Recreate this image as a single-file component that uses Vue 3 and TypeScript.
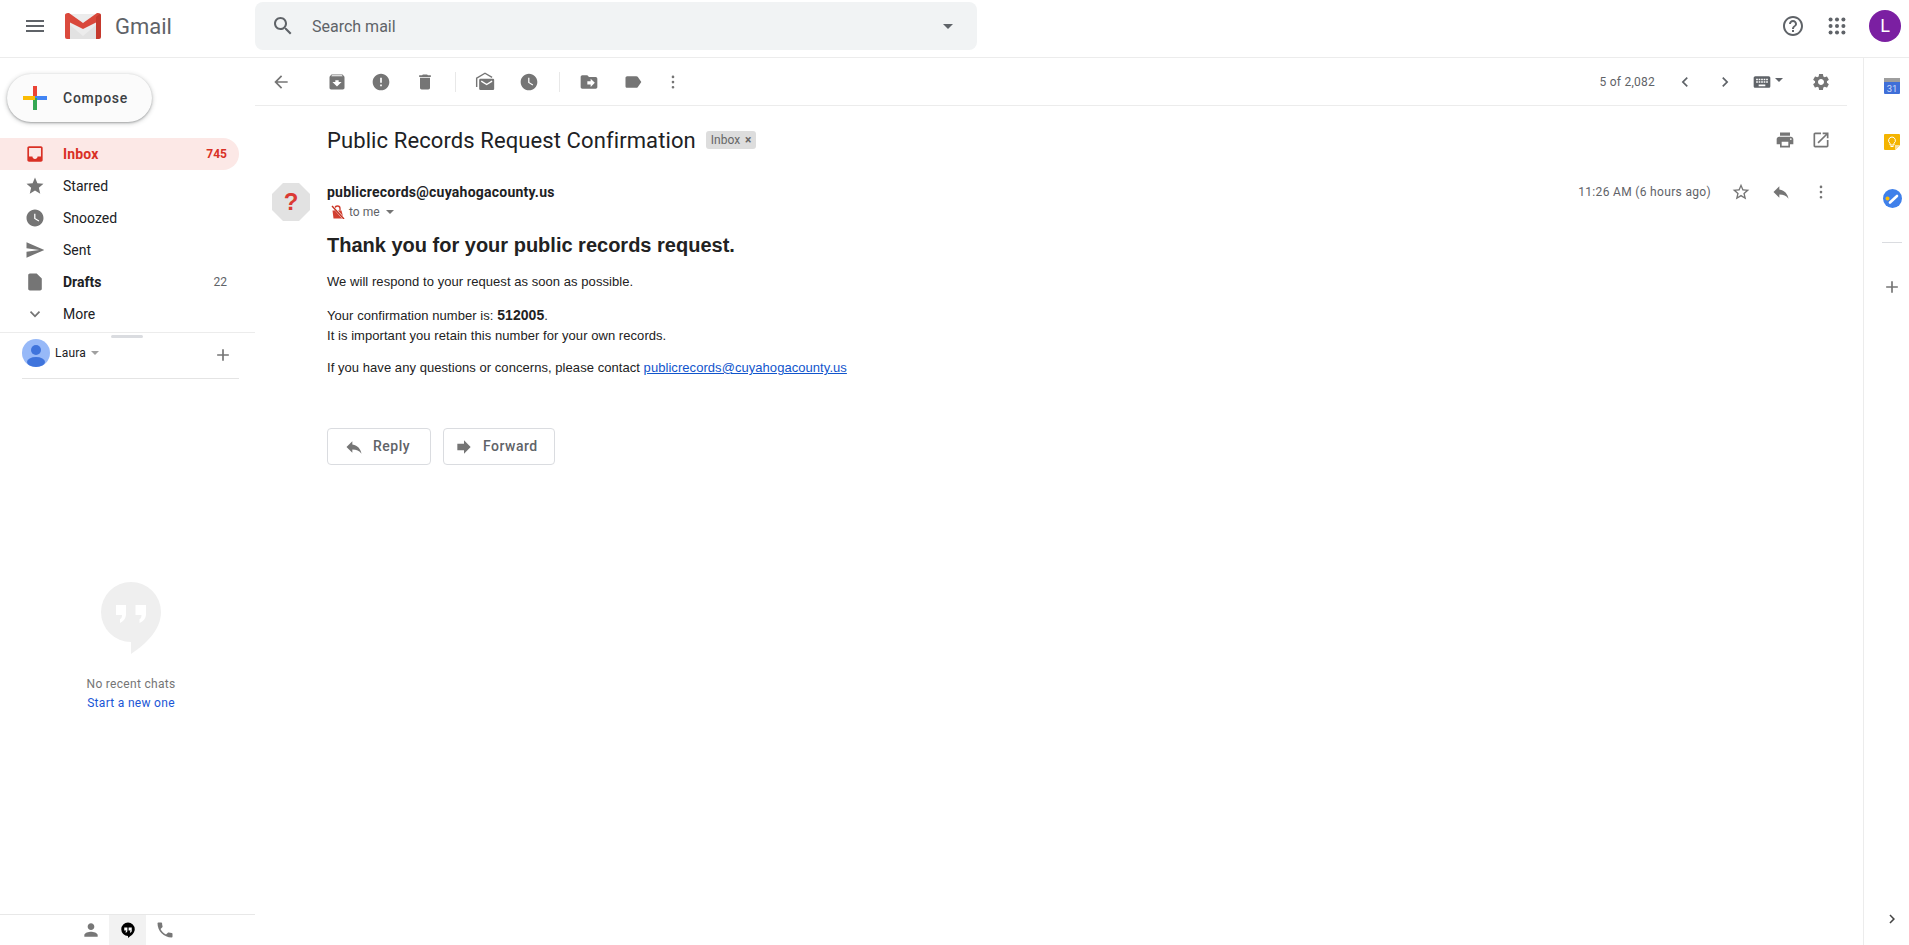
<script setup lang="ts">
const p = {
  menu: 'M3 18h18v-2H3v2zm0-5h18v-2H3v2zm0-7v2h18V6H3z',
  search: 'M15.5 14h-.79l-.28-.27C15.41 12.59 16 11.11 16 9.5 16 5.91 13.09 3 9.5 3S3 5.91 3 9.5 5.91 16 9.5 16c1.61 0 3.09-.59 4.23-1.57l.27.28v.79l5 4.99L20.49 19l-4.99-5zm-6 0C7.01 14 5 11.99 5 9.5S7.01 5 9.5 5 14 7.01 14 9.5 11.99 14 9.5 14z',
  help: 'M11 18h2v-2h-2v2zm1-16C6.48 2 2 6.48 2 12s4.48 10 10 10 10-4.48 10-10S17.52 2 12 2zm0 18c-4.41 0-8-3.59-8-8s3.59-8 8-8 8 3.59 8 8-3.59 8-8 8zm0-14c-2.21 0-4 1.79-4 4h2c0-1.1.9-2 2-2s2 .9 2 2c0 2-3 1.75-3 5h2c0-2.25 3-2.5 3-5 0-2.21-1.79-4-4-4z',
  back: 'M20 11H7.83l5.59-5.59L12 4l-8 8 8 8 1.41-1.41L7.83 13H20v-2z',
  archive: 'M20.54 5.23l-1.39-1.68C18.88 3.21 18.47 3 18 3H6c-.47 0-.88.21-1.16.55L3.46 5.23C3.17 5.57 3 6.02 3 6.5V19c0 1.1.9 2 2 2h14c1.1 0 2-.9 2-2V6.5c0-.48-.17-.93-.46-1.27zM12 17.5L6.5 12H10v-2h4v2h3.5L12 17.5zM5.12 5l.81-1h12l.94 1H5.12z',
  report: 'M12 2C6.48 2 2 6.48 2 12s4.48 10 10 10 10-4.48 10-10S17.52 2 12 2zm1 15h-2v-2h2v2zm0-4h-2V7h2v6z',
  del: 'M6 19c0 1.1.9 2 2 2h8c1.1 0 2-.9 2-2V7H6v12zM19 4h-3.5l-1-1h-5l-1 1H5v2h14V4z',
  clock: 'M11.99 2C6.47 2 2 6.48 2 12s4.47 10 9.99 10C17.52 22 22 17.52 22 12S17.52 2 11.99 2zM16.25 16.15L11 13V7h1.5v5.25l4.5 2.67-.75 1.23z',
  move: 'M20 6h-8l-2-2H4c-1.1 0-1.99.9-1.99 2L2 18c0 1.1.9 2 2 2h16c1.1 0 2-.9 2-2V8c0-1.1-.9-2-2-2zm-6 12v-3h-4v-4h4V8l5 5-5 5z',
  label: 'M17.63 5.84C17.27 5.33 16.67 5 16 5L5 5.01C3.9 5.01 3 5.9 3 7v10c0 1.1.9 1.99 2 1.99L16 19c.67 0 1.27-.33 1.63-.84L22 12l-4.37-6.16z',
  prev: 'M15.41 7.41L14 6l-6 6 6 6 1.41-1.41L10.83 12z',
  next: 'M10 6L8.59 7.41 13.17 12l-4.58 4.59L10 18l6-6z',
  keyboard: 'M20 5H4c-1.1 0-1.99.9-1.99 2L2 17c0 1.1.9 2 2 2h16c1.1 0 2-.9 2-2V7c0-1.1-.9-2-2-2zm-9 3h2v2h-2V8zm0 3h2v2h-2v-2zM8 8h2v2H8V8zm0 3h2v2H8v-2zm-1 2H5v-2h2v2zm0-3H5V8h2v2zm9 7H8v-2h8v2zm0-4h-2v-2h2v2zm0-3h-2V8h2v2zm3 3h-2v-2h2v2zm0-3h-2V8h2v2z',
  gear: 'M19.14 12.94c.04-.3.06-.61.06-.94 0-.32-.02-.64-.07-.94l2.03-1.58c.18-.14.23-.41.12-.61l-1.92-3.32c-.12-.22-.37-.29-.59-.22l-2.39.96c-.5-.38-1.03-.7-1.62-.94l-.36-2.54c-.04-.24-.24-.41-.48-.41h-3.84c-.24 0-.43.17-.47.41l-.36 2.54c-.59.24-1.13.57-1.62.94l-2.39-.96c-.22-.08-.47 0-.59.22L2.74 8.87c-.12.21-.08.47.12.61l2.03 1.58c-.05.3-.09.63-.09.94s.02.64.07.94l-2.03 1.58c-.18.14-.23.41-.12.61l1.92 3.32c.12.22.37.29.59.22l2.39-.96c.5.38 1.03.7 1.62.94l.36 2.54c.05.24.24.41.48.41h3.84c.24 0 .44-.17.47-.41l.36-2.54c.59-.24 1.13-.56 1.62-.94l2.39.96c.22.08.47 0 .59-.22l1.92-3.32c.12-.22.07-.47-.12-.61l-2.01-1.58zM12 15.6c-1.98 0-3.6-1.62-3.6-3.6s1.62-3.6 3.6-3.6 3.6 1.62 3.6 3.6-1.62 3.6-3.6 3.6z',
  print: 'M19 8H5c-1.66 0-3 1.34-3 3v6h4v4h12v-4h4v-6c0-1.66-1.34-3-3-3zm-3 11H8v-5h8v5zm3-7c-.55 0-1-.45-1-1s.45-1 1-1 1 .45 1 1-.45 1-1 1zm-1-9H6v4h12V3z',
  open: 'M19 19H5V5h7V3H5c-1.11 0-2 .9-2 2v14c0 1.1.89 2 2 2h14c1.1 0 2-.9 2-2v-7h-2v7zM14 3v2h3.59l-9.83 9.83 1.41 1.41L19 6.41V10h2V3h-7z',
  starO: 'M22 9.24l-7.19-.62L12 2 9.19 8.63 2 9.24l5.46 4.73L5.82 21 12 17.27 18.18 21l-1.63-7.03L22 9.24zM12 15.4l-3.76 2.27 1-4.28-3.32-2.88 4.38-.38L12 6.1l1.71 4.04 4.38.38-3.32 2.88 1 4.28L12 15.4z',
  reply: 'M10 9V5l-7 7 7 7v-4.1c5 0 8.5 1.6 11 5.1-1-5-4-10-11-11z',
  forward: 'M12 8V4l8 8-8 8v-4H4V8z',
  person: 'M12 12c2.21 0 4-1.79 4-4s-1.79-4-4-4-4 1.79-4 4 1.79 4 4 4zm0 2c-2.67 0-8 1.34-8 4v2h16v-2c0-2.66-5.33-4-8-4z',
  call: 'M6.62 10.79c1.44 2.83 3.76 5.14 6.59 6.59l2.2-2.2c.27-.27.67-.36 1.02-.24 1.12.37 2.33.57 3.57.57.55 0 1 .45 1 1V20c0 .55-.45 1-1 1-9.39 0-17-7.61-17-17 0-.55.45-1 1-1h3.5c.55 0 1 .45 1 1 0 1.25.2 2.45.57 3.57.11.35.03.74-.25 1.02l-2.2 2.2z',
  plus: 'M19 13h-6v6h-2v-6H5v-2h6V5h2v6h6v2z',
  dots: 'M12 7.5a1.6 1.6 0 1 0 0-3.2 1.6 1.6 0 0 0 0 3.2zm0 3a1.6 1.6 0 1 0 0 3.2 1.6 1.6 0 0 0 0-3.2zm0 6.2a1.6 1.6 0 1 0 0 3.2 1.6 1.6 0 0 0 0-3.2z',
}

interface NavItem { label: string; d: string; count?: string; active?: boolean; bold?: boolean }
const nav: NavItem[] = [
  { label: 'Inbox', active: true, count: '745', d: 'M19 3H5c-1.1 0-2 .9-2 2v14c0 1.1.9 2 2 2h14c1.1 0 2-.9 2-2V5c0-1.1-.9-2-2-2zm0 12h-4c0 1.66-1.35 3-3 3s-3-1.34-3-3H5V5h14v10z' },
  { label: 'Starred', d: 'M12 17.27L18.18 21l-1.64-7.03L22 9.24l-7.19-.61L12 2 9.19 8.63 2 9.24l5.46 4.73L5.82 21z' },
  { label: 'Snoozed', d: p.clock },
  { label: 'Sent', d: 'M2.01 21L23 12 2.01 3 2 10l15 2-15 2z' },
  { label: 'Drafts', bold: true, count: '22', d: 'M14 2H6c-1.1 0-1.99.9-1.99 2L4 20c0 1.1.89 2 1.99 2H18c1.1 0 2-.9 2-2V8l-6-6z' },
  { label: 'More', d: 'M16.59 8.59L12 13.17 7.41 8.59 6 10l6 6 6-6z' },
]

const bar1 = [p.archive, p.report, p.del]
const appDots = [5, 12, 19]
</script>

<template>
  <div class="app">
    <header class="hdr">
      <div class="brand">
        <svg class="i24 dark" viewBox="0 0 24 24"><path :d="p.menu" /></svg>
        <svg class="logo" viewBox="0 0 36 26">
          <rect x="2" y="1" width="32" height="25" fill="#ececec" />
          <path d="M5 26V12l13 11 13-11v14z" fill="#e2e2e2" />
          <path d="M3 0h1l14 10L32 0h1c1.700 0 3 1.300 3 3v4L18 16 0 7V3c0-1.700 1.300-3 3-3z" fill="#d9483b" />
          <path d="M0 3c0-1 .5-2 1-2.400L5 4v22H2a2 2 0 0 1-2-2z" fill="#db4a3d" />
          <path d="M31 4l4-3.400c.6.500 1 1.400 1 2.400v21a2 2 0 0 1-2 2h-3z" fill="#c5392d" />
        </svg>
        <span class="wordmark">Gmail</span>
      </div>
      <div class="search">
        <svg class="i24 dark" viewBox="0 0 24 24"><path :d="p.search" /></svg>
        <span class="search-text">Search mail</span>
        <span class="caret search-caret"></span>
      </div>
      <div class="hdr-right">
        <svg class="i24 help" viewBox="0 0 24 24"><path :d="p.help" /></svg>
        <svg class="apps" viewBox="0 0 24 24">
          <template v-for="y in appDots" :key="y">
            <circle v-for="x in appDots" :key="x" :cx="x" :cy="y" r="2.200" />
          </template>
        </svg>
        <div class="avatar">L</div>
      </div>
    </header>

    <div class="body">
      <aside class="side">
        <button class="compose">
          <svg class="plus-logo" viewBox="0 0 24 24">
            <rect x="10" y="0" width="4" height="12" fill="#ea4335" />
            <rect x="12" y="10" width="12" height="4" fill="#4285f4" />
            <rect x="10" y="12" width="4" height="12" fill="#34a853" />
            <rect x="0" y="10" width="12" height="4" fill="#fbbc04" />
          </svg>
          <span>Compose</span>
        </button>
        <nav class="nav">
          <div v-for="n in nav" :key="n.label" class="nav-item" :class="{ active: n.active, bold: n.bold }">
            <svg class="nav-icon" viewBox="0 0 24 24"><path :d="n.d" /></svg>
            <span class="nav-label">{{ n.label }}</span>
            <span v-if="n.count" class="nav-count">{{ n.count }}</span>
          </div>
        </nav>
        <div class="hangouts">
          <div class="handle"></div>
          <div class="user">
            <svg class="user-pic" viewBox="0 0 28 28">
              <circle cx="14" cy="14" r="14" fill="#97b9f8" />
              <circle cx="14" cy="11" r="5" fill="#3f74dc" />
              <ellipse cx="14" cy="23" rx="9" ry="5" fill="#3f74dc" />
            </svg>
            <span class="user-name">Laura</span>
            <span class="caret user-caret"></span>
            <svg class="user-plus" viewBox="0 0 24 24"><path :d="p.plus" /></svg>
          </div>
        </div>
        <div class="empty">
          <svg class="bubble" viewBox="0 0 60 72">
            <path d="M30 0a30 30 0 0 1 30 30c0 18-15 32-30 42V60A30 30 0 0 1 30 0z" fill="#efefef" />
            <path d="M15 23h10v9c0 4-2.500 7.500-6 9v-4c1 0 2-1.500 2-4h-6zM34.500 23h10.500v9c0 4-2.500 7.500-6.500 9v-4c1 0 2-1.500 2-4h-6z" fill="#fff" />
          </svg>
          <div class="empty-title">No recent chats</div>
          <div class="empty-link">Start a new one</div>
        </div>
        <div class="tabs">
          <div class="tab"><svg viewBox="0 0 24 24"><path :d="p.person" /></svg></div>
          <div class="tab selected">
            <svg class="tab-chat" viewBox="0 0 24 24">
              <path d="M12 2a9 9 0 0 1 9 9c0 5-4.500 8.500-9 11.500V20a9 9 0 0 1 0-18z" fill="#000" />
              <path d="M7 8.500h4.200v4c0 1.800-1 2.800-2.400 3.200v-1.800c.4 0 .8-.7.8-1.400H7zM12.800 8.500H17v4c0 1.800-1 2.800-2.400 3.200v-1.800c.4 0 .8-.7.8-1.400h-2.600z" fill="#fff" />
            </svg>
          </div>
          <div class="tab"><svg viewBox="0 0 24 24"><path :d="p.call" /></svg></div>
        </div>
      </aside>

      <main class="main">
        <div class="toolbar">
          <button class="tb tb-back"><svg viewBox="0 0 24 24"><path :d="p.back" /></svg></button>
          <button v-for="d in bar1" :key="d" class="tb"><svg viewBox="0 0 24 24"><path :d="d" /></svg></button>
          <span class="tb-sep"></span>
          <button class="tb">
            <svg viewBox="0 0 24 24">
              <path d="M2 18V7.500L12 1.500l8.500 5" fill="none" stroke="#757575" stroke-width="1.700" />
              <path d="M6.500 8h15a1.500 1.500 0 0 1 1.500 1.500v10.500a1.500 1.500 0 0 1-1.500 1.500h-15A1.500 1.500 0 0 1 5 20V9.500A1.500 1.500 0 0 1 6.500 8z" />
              <path d="M7.500 11l6.500 4 6.500-4" fill="none" stroke="#fff" stroke-width="1.700" />
            </svg>
          </button>
          <button class="tb"><svg viewBox="0 0 24 24"><path :d="p.clock" /></svg></button>
          <span class="tb-sep"></span>
          <button class="tb"><svg viewBox="0 0 24 24"><path :d="p.move" /></svg></button>
          <button class="tb"><svg viewBox="0 0 24 24"><path :d="p.label" /></svg></button>
          <button class="tb tb-more"><svg viewBox="0 0 24 24"><path :d="p.dots" /></svg></button>
          <span class="pager">5 of 2,082</span>
          <button class="tb tb-page"><svg viewBox="0 0 24 24"><path :d="p.prev" /></svg></button>
          <button class="tb tb-page"><svg viewBox="0 0 24 24"><path :d="p.next" /></svg></button>
          <div class="kb">
            <svg viewBox="0 0 24 24"><path :d="p.keyboard" /></svg>
            <span class="caret kb-caret"></span>
          </div>
          <button class="tb tb-more"><svg viewBox="0 0 24 24"><path :d="p.gear" /></svg></button>
        </div>

        <div class="subject-row">
          <h2 class="subject">Public Records Request Confirmation</h2>
          <span class="chip">Inbox<span class="chip-x">×</span></span>
          <button class="tb tb-more subject-print"><svg viewBox="0 0 24 24"><path :d="p.print" /></svg></button>
          <button class="tb tb-more"><svg viewBox="0 0 24 24"><path :d="p.open" /></svg></button>
        </div>

        <div class="msg">
          <svg class="sender-pic" viewBox="0 0 38 38">
            <path d="M11 0h16l11 11v16L27 38H11L0 27V11z" fill="#e2e2e2" />
          </svg>
          <span class="qm">?</span>
          <div class="msg-body">
            <div class="sender-row">
              <span class="sender">publicrecords@cuyahogacounty.us</span>
              <span class="time">11:26 AM (6 hours ago)</span>
              <button class="tb tb-meta"><svg viewBox="0 0 24 24"><path :d="p.starO" /></svg></button>
              <button class="tb tb-meta"><svg viewBox="0 0 24 24"><path :d="p.reply" /></svg></button>
              <button class="tb tb-meta"><svg viewBox="0 0 24 24"><path :d="p.dots" /></svg></button>
            </div>
            <div class="to-row">
              <svg class="unenc" viewBox="0 0 14 14">
                <path d="M1.500 5.500h9l2 8H2.500z" fill="#d23f31" />
                <path d="M4 5.500V3.500a2.500 2.500 0 0 1 5 0v2" fill="none" stroke="#d23f31" stroke-width="1.400" />
                <path d="M1 0.500l12 13.500" stroke="#fff" stroke-width="2.200" />
                <path d="M1 1l12 13" stroke="#c5301f" stroke-width="1.400" />
              </svg>
              <span class="to-me">to me</span>
              <span class="caret to-caret"></span>
            </div>
            <div class="content">
              <h1 class="thanks">Thank you for your public records request.</h1>
              <p class="p1">We will respond to your request as soon as possible.</p>
              <p class="p2">Your confirmation number is: <b class="num">512005</b>.<br />It is important you retain this number for your own records.</p>
              <p class="p3">If you have any questions or concerns, please contact <a class="mail" href="#">publicrecords@cuyahogacounty.us</a></p>
            </div>
            <div class="actions">
              <button class="act act-reply"><svg viewBox="0 0 24 24"><path :d="p.reply" /></svg><span>Reply</span></button>
              <button class="act act-forward"><svg viewBox="0 0 24 24"><path :d="p.forward" /></svg><span>Forward</span></button>
            </div>
          </div>
        </div>
      </main>

      <aside class="panel">
        <svg class="addon addon-cal" viewBox="0 0 16 16">
          <rect width="16" height="16" rx="1" fill="#3f6fd8" />
          <rect width="16" height="4" fill="#9e9e9e" />
          <text x="8" y="13.500" text-anchor="middle" font-size="9.500" fill="#cfdcf8" font-family="Roboto, sans-serif">31</text>
        </svg>
        <svg class="addon addon-keep" viewBox="0 0 16 16">
          <path d="M1 0h14a1 1 0 0 1 1 1v10l-5 5H1a1 1 0 0 1-1-1V1a1 1 0 0 1 1-1z" fill="#f4b400" />
          <path d="M16 11l-5 5v-5z" fill="#fbe09a" />
          <path d="M8 3a3.500 3.500 0 0 1 2 6.300V11H6V9.300A3.500 3.500 0 0 1 8 3zM6.500 12.500h3" fill="none" stroke="#fff" stroke-width="1" />
        </svg>
        <svg class="addon addon-tasks" viewBox="0 0 19 19">
          <circle cx="9.500" cy="9.500" r="9.500" fill="#3f80ea" />
          <circle cx="4.500" cy="9.500" r="2" fill="#fbbc04" />
          <path d="M7 13.500l7-6.500" stroke="#fff" stroke-width="2.600" stroke-linecap="round" />
        </svg>
        <div class="panel-sep"></div>
        <svg class="panel-plus" viewBox="0 0 24 24"><path :d="p.plus" /></svg>
        <svg class="panel-chev" viewBox="0 0 24 24"><path :d="p.next" /></svg>
      </aside>
    </div>
  </div>
</template>

<style scoped>
.app {
  height: 945px;
  display: flex;
  flex-direction: column;
  overflow: hidden;
  background: #fff;
  color: #202124;
  font-family: Roboto, "Liberation Sans", sans-serif;
}
button {
  border: 0;
  background: none;
  padding: 0;
  font: inherit;
}
svg {
  display: block;
  flex: none;
}
.i24 { width: 24px; height: 24px; }
.dark { fill: #5f6368; }
.caret {
  width: 0;
  height: 0;
  flex: none;
  border-style: solid;
  border-width: 5px 5px 0;
  border-color: #5f6368 transparent transparent;
}

.hdr {
  height: 58px;
  box-sizing: border-box;
  flex: none;
  display: flex;
  align-items: center;
  padding: 2px 0 7px;
  border-bottom: 1px solid #ececec;
}
.brand {
  width: 255px;
  box-sizing: border-box;
  flex: none;
  padding-left: 23px;
  display: flex;
  align-items: center;
}
.logo { width: 36px; height: 26px; margin-left: 18px; }
.wordmark {
  margin-left: 14px;
  font-size: 22px;
  color: #5f6368;
}
.search {
  width: 722px;
  height: 48px;
  box-sizing: border-box;
  flex: none;
  display: flex;
  align-items: center;
  padding: 0 24px 0 16px;
  background: #f1f3f4;
  border-radius: 8px;
}
.search-text {
  margin-left: 17px;
  font-size: 16px;
  color: #5f6368;
}
.search-caret { margin-left: auto; }
.hdr-right {
  margin-left: auto;
  display: flex;
  align-items: center;
  padding-right: 8px;
}
.help { fill: #5f6368; width: 24px; height: 24px; }
.apps { width: 22px; height: 22px; fill: #5f6368; margin-left: 21px; margin-right: 21px; }
.avatar {
  width: 32px;
  height: 32px;
  border-radius: 50%;
  background: #7b1fa2;
  color: #fff;
  font-size: 18px;
  line-height: 32px;
  text-align: center;
}

.body {
  flex: 1;
  display: flex;
  min-height: 0;
}

.side {
  width: 255px;
  flex: none;
  display: flex;
  flex-direction: column;
}
.compose {
  width: 145px;
  height: 48px;
  margin: 16px 0 0 7px;
  flex: none;
  display: flex;
  align-items: center;
  padding: 0 0 1px 16px;
  border-radius: 24px;
  background: #fbfbfb;
  box-shadow: 0 1px 2px rgba(60, 64, 67, .35), 0 1px 4px 1px rgba(60, 64, 67, .2);
  font-size: 14px;
  font-weight: 500;
  letter-spacing: .75px;
  color: #3c4043;
}
.plus-logo { width: 24px; height: 24px; margin-right: 16px; margin-top: 1px; }
.nav { margin-top: 16px; }
.nav-item {
  height: 32px;
  width: 239px;
  box-sizing: border-box;
  padding: 0 12px 0 23px;
  display: flex;
  align-items: center;
  font-size: 14px;
  color: #202124;
  border-radius: 0 16px 16px 0;
}
.nav-icon { width: 24px; height: 24px; fill: #757575; transform: scale(.85); margin-right: 16px; }
.nav-label { flex: 1; }
.nav-count { font-size: 12px; color: #5f6368; }
.nav-item.bold .nav-label { font-weight: 700; }
.nav-item.active {
  background: #fce8e6;
  color: #d93025;
}
.nav-item.active .nav-label { font-weight: 700; letter-spacing: .15px; }
.nav-item.active .nav-icon { fill: #d93025; }
.nav-item.active .nav-count { font-weight: 700; color: #d93025; }

.hangouts {
  margin-top: 2px;
  border-top: 1px solid #ececec;
  flex: none;
}
.handle {
  width: 32px;
  height: 3px;
  margin: 2px 0 1px 111px;
  background: #dadce0;
  border-radius: 2px;
}
.user {
  height: 28px;
  margin: 0 16px 0 22px;
  padding-bottom: 11px;
  border-bottom: 1px solid #e4e4e4;
  display: flex;
  align-items: center;
  box-sizing: content-box;
}
.user-pic { width: 28px; height: 28px; }
.user-name { margin-left: 5px; font-size: 12px; letter-spacing: .2px; }
.user-caret { margin-left: 5px; border-width: 4px 4px 0; border-top-color: #a0a0a0; }
.user-plus { width: 20px; height: 20px; fill: #757575; margin-left: auto; margin-right: 6px; position: relative; top: 2px; }

.empty {
  flex: 1;
  display: flex;
  flex-direction: column;
  align-items: center;
  padding: 203px 0 0 7px;
  font-size: 12px;
  line-height: 19px;
  letter-spacing: .3px;
}
.bubble { width: 60px; height: 72px; margin-bottom: 21px; }
.empty-title { color: #757575; }
.empty-link { color: #1a56d6; }

.tabs {
  height: 31px;
  box-sizing: border-box;
  flex: none;
  border-top: 1px solid #e8e8e8;
  display: flex;
  justify-content: center;
}
.tab {
  width: 37px;
  display: flex;
  align-items: center;
  justify-content: center;
}
.tab svg { width: 20px; height: 20px; fill: #777; }
.tab.selected { background: #f2f2f2; }
.tab .tab-chat { width: 18px; height: 18px; }

.main {
  flex: 1;
  min-width: 0;
  display: flex;
  flex-direction: column;
}
.toolbar {
  height: 48px;
  box-sizing: border-box;
  flex: none;
  margin-right: 16px;
  padding: 1px 8px 0 4px;
  display: flex;
  align-items: center;
  border-bottom: 1px solid #ececec;
}
.tb {
  width: 44px;
  height: 24px;
  flex: none;
  display: flex;
  align-items: center;
  justify-content: center;
}
.tb svg { width: 20px; height: 20px; fill: #757575; }
.tb-back { margin-right: 12px; }
.tb-sep {
  width: 1px;
  height: 20px;
  margin: 0 7px 0 8px;
  background: #e8e8e8;
  flex: none;
}
.tb-more { width: 36px; }
.pager {
  margin-left: auto;
  margin-right: 10px;
  font-size: 12px;
  letter-spacing: .25px;
  color: #5f6368;
}
.tb-page { width: 40px; }
.tb-page svg { fill: #5f6368; }
.kb {
  width: 58px;
  box-sizing: border-box;
  padding-left: 7px;
  display: flex;
  align-items: center;
  flex: none;
}
.kb svg { width: 20px; height: 20px; fill: #5f6368; }
.kb-caret { margin: -4px 0 0 3px; border-width: 4px 4px 0; }

.subject-row {
  height: 68px;
  box-sizing: border-box;
  flex: none;
  display: flex;
  align-items: center;
  padding: 0 24px 0 72px;
}
.subject {
  margin: 0;
  font-size: 22px;
  font-weight: 400;
  letter-spacing: .1px;
  color: #202124;
}
.chip {
  margin-left: 10px;
  padding: 0 5px;
  height: 18px;
  line-height: 18px;
  background: #dddddd;
  color: #666;
  font-size: 12px;
  border-radius: 3px;
}
.chip-x { font-weight: 700; margin-left: 5px; }
.subject-print { margin-left: auto; }

.msg {
  display: flex;
  position: relative;
  padding: 9px 22px 0 17px;
}
.sender-pic { width: 38px; height: 38px; margin-right: 17px; }
.qm {
  position: absolute;
  left: 17px;
  top: 9px;
  width: 38px;
  line-height: 38px;
  text-align: center;
  font-family: "Liberation Sans", sans-serif;
  font-size: 24px;
  font-weight: 700;
  color: #db3a34;
}
.msg-body { flex: 1; min-width: 0; }
.sender-row {
  height: 18px;
  display: flex;
  align-items: center;
}
.sender { font-size: 14px; font-weight: 700; letter-spacing: .24px; color: #202124; }
.time {
  margin-left: auto;
  margin-right: 10px;
  font-size: 12px;
  letter-spacing: .33px;
  color: #5f6368;
}
.tb-meta { width: 40px; height: 18px; }
.to-row {
  height: 20px;
  margin-top: 1px;
  display: flex;
  align-items: center;
  padding-left: 4px;
  font-size: 12px;
  color: #5f6368;
}
.unenc { width: 14px; height: 14px; }
.to-me { margin-left: 4px; }
.to-caret { margin-left: 6px; border-width: 4px 4px 0; border-top-color: #757575; }

.content {
  font-family: "Liberation Sans", Arial, sans-serif;
  font-size: 13px;
  line-height: 20px;
  letter-spacing: .055px;
  color: #222;
}
.thanks {
  margin: 11px 0 0;
  font-size: 20px;
  line-height: 24px;
  font-weight: 700;
  letter-spacing: 0;
}
.p1 { margin: 15px 0 0; }
.p2 { margin: 13px 0 0; }
.p3 { margin: 12px 0 0; }
.num { font-size: 14px; }
.mail { color: #1155cc; }

.actions {
  margin-top: 50px;
  display: flex;
  gap: 12px;
}
.act {
  height: 37px;
  box-sizing: border-box;
  display: flex;
  align-items: center;
  border: 1px solid #dadce0;
  border-radius: 4px;
  font-size: 14px;
  font-weight: 500;
  letter-spacing: .5px;
  color: #5f6368;
}
.act span { margin-top: -2px; }
.act svg { width: 20px; height: 20px; fill: #757575; margin-right: 9px; }
.act-reply { width: 104px; padding-left: 16px; }
.act-forward { width: 112px; padding-left: 10px; }

.panel {
  width: 46px;
  flex: none;
  box-sizing: border-box;
  border-left: 1px solid #ececec;
  display: flex;
  flex-direction: column;
  align-items: center;
  padding: 20px 0 0 11px;
  position: relative;
}
.addon { width: 16px; height: 16px; }
.addon-cal { margin-bottom: 40px; }
.addon-keep { margin-bottom: 39px; }
.addon-tasks { width: 19px; height: 19px; margin-bottom: 34px; }
.panel-sep { width: 20px; height: 1px; background: #dadce0; }
.panel-plus { width: 20px; height: 20px; fill: #757575; margin-top: 34px; }
.panel-chev {
  position: absolute;
  left: 19px;
  bottom: 17px;
  width: 18px;
  height: 18px;
  fill: #444;
}
</style>

<style>
html, body { margin: 0; background: #fff; }
</style>
